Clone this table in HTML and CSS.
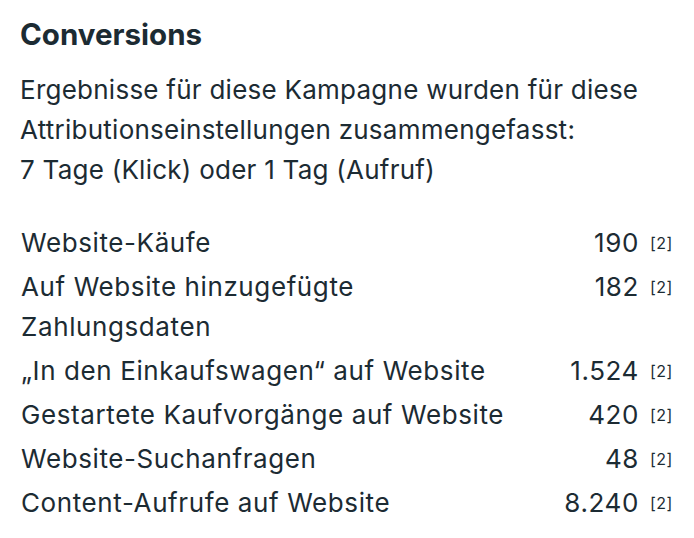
FILE: index.html
```html
<!DOCTYPE html>
<html lang="de">
<head>
<meta charset="utf-8">
<link rel="stylesheet" href="styles.css">
</head>
<body>
<div class="panel">
  <h1 class="title">Conversions</h1>
  <p class="intro">Ergebnisse für diese Kampagne wurden für diese Attributionseinstellungen zusammengefasst:<br>7 Tage (Klick) oder 1 Tag (Aufruf)</p>
  <div class="rows">
    <div class="row"><span class="label">Website-Käufe</span><span class="value">190</span><span class="note">[2]</span></div>
    <div class="row"><span class="label">Auf Website hinzugefügte Zahlungsdaten</span><span class="value">182</span><span class="note">[2]</span></div>
    <div class="row"><span class="label">„In den Einkaufswagen“ auf Website</span><span class="value">1.524</span><span class="note">[2]</span></div>
    <div class="row"><span class="label">Gestartete Kaufvorgänge auf Website</span><span class="value">420</span><span class="note">[2]</span></div>
    <div class="row"><span class="label">Website-Suchanfragen</span><span class="value">48</span><span class="note">[2]</span></div>
    <div class="row"><span class="label">Content-Aufrufe auf Website</span><span class="value">8.240</span><span class="note">[2]</span></div>
  </div>
</div>
</body>
</html>
```
FILE: styles.css
```css
html, body {
  margin: 0;
  padding: 0;
  background: #ffffff;
}
body {
  font-family: Inter, "Noto Sans", sans-serif;
  color: #1c2b33;
}
.panel {
  padding: 14px 20px 0 20px;
  width: 654px;
}
.title {
  margin: 0;
  font-size: 29.5px;
  font-weight: 700;
  line-height: 40px;
}
.intro {
  margin: 16px 0 0 0;
  font-size: 26px;
  letter-spacing: 0.25px;
  line-height: 40px;
  width: 640px;
}
.rows {
  margin-top: 33px;
  display: flex;
  flex-direction: column;
  gap: 4px;
}
.row {
  display: flex;
  align-items: baseline;
  font-size: 26px;
  letter-spacing: 0.6px;
  line-height: 40px;
  padding-left: 1px;
}
.label {
  width: 500px;
  flex: none;
}
.value {
  margin-left: auto;
  text-align: right;
}
.note {
  font-size: 16px;
  line-height: 1;
  letter-spacing: 0.5px;
  width: 22px;
  margin-left: 11px;
  margin-right: 2px;
  position: relative;
  top: -3px;
}
```
